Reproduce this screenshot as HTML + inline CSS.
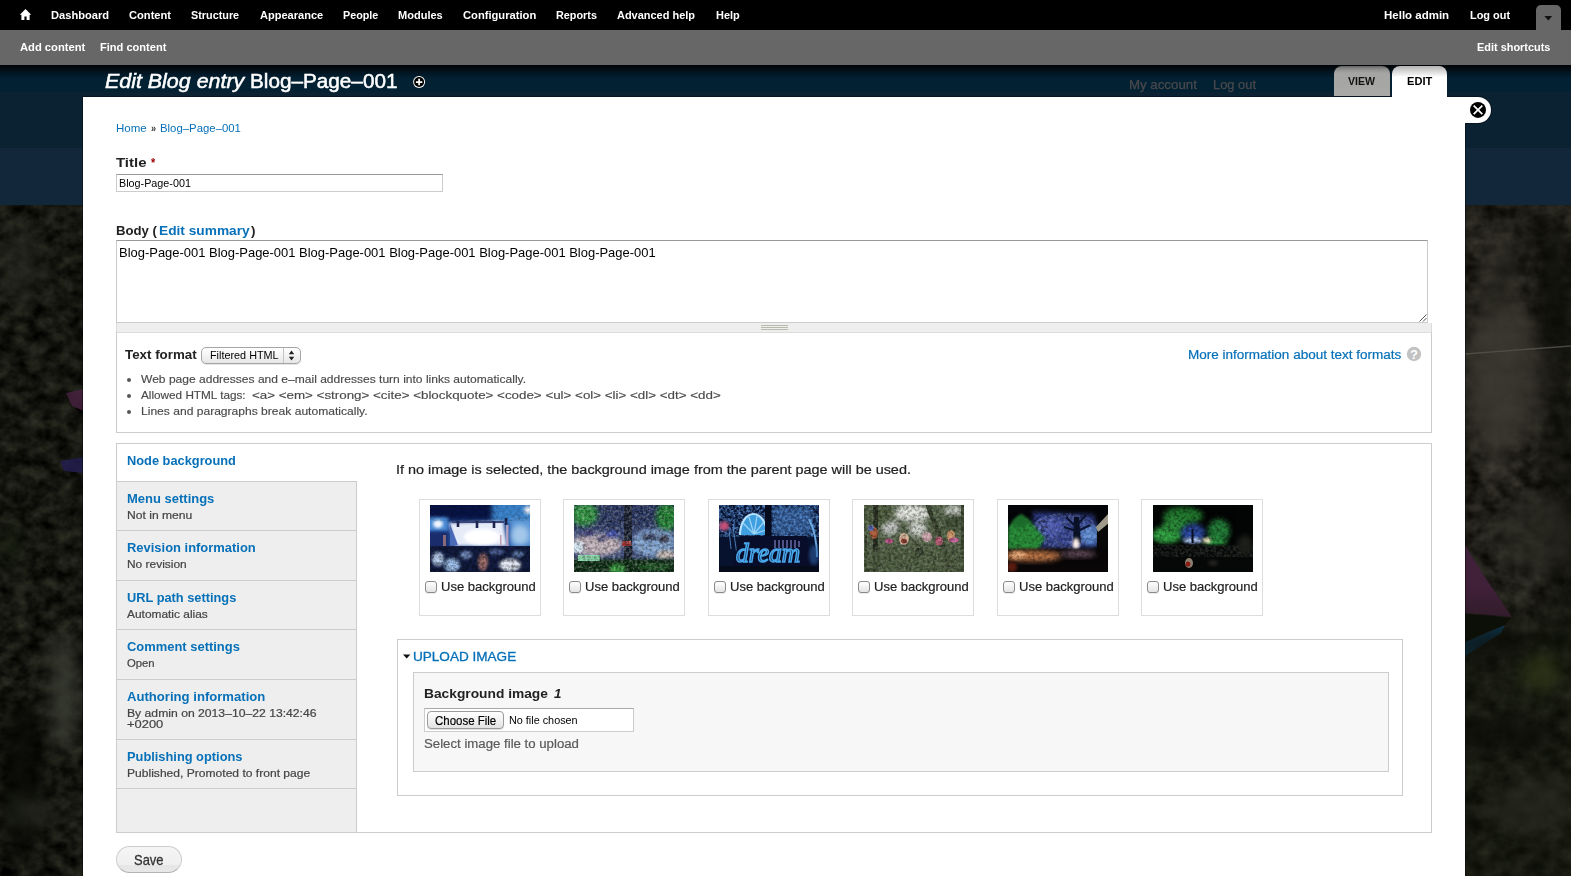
<!DOCTYPE html>
<html><head><meta charset="utf-8"><title>Edit Blog entry Blog-Page-001</title>
<style>
html,body{margin:0;padding:0}
body{width:1571px;height:876px;overflow:hidden;position:relative;background:#1b1e16;font-family:"Liberation Sans",sans-serif}
.a{position:absolute;box-sizing:border-box}
.t{position:absolute;white-space:pre;transform-origin:0 50%;display:block}
svg{position:absolute;display:block}
#tb{left:0;top:0;width:1571px;height:30px;background:#000}
#sc{left:0;top:30px;width:1571px;height:35px;background:#676767}
#tog{left:1536px;top:5px;width:25px;height:25px;background:#676767;border-radius:5px 5px 0 0}
.band{left:0;width:1571px}
#ov{left:83px;top:97px;width:1382px;height:779px;background:#fff}
#close{left:1465px;top:97px;width:26px;height:26px;background:#fff;border-radius:0 13px 13px 0}
.tab{top:66px;height:31px;border-radius:8px 8px 0 0}
.bx{border:1px solid #ccc}
.vt{left:116px;width:241px;background:#eee;border:1px solid #ccc;border-left:0;border-top:0}
.thumb{top:499px;width:122px;height:117px;border:1px solid #ddd;background:#fff}
.cb{width:12px;height:12px;border:1px solid #8a8a8a;border-radius:3px;background:linear-gradient(#fff,#e4e4e4);top:581px;box-shadow:0 1px 0 rgba(0,0,0,.08)}

</style></head>
<body>
<!-- page backdrop (dimmed site behind overlay) -->
<div class="a band" style="top:65px;height:27px;background:linear-gradient(#000206 0,#010a10 3px,#02121a 6px,#021827 9px,#021e2e 12px,#022233 15px,#022233 27px)"></div>
<div class="a band" style="top:92px;height:56px;background:#0b2232"></div>
<div class="a band" style="top:148px;height:57px;background:#12283a"></div>
<svg style="left:0;top:205px" width="84" height="671" viewBox="0 0 84 671">
<defs><filter id="sb" x="-60%" y="-60%" width="220%" height="220%" color-interpolation-filters="sRGB"><feGaussianBlur stdDeviation="9"/></filter>
<filter id="folL" x="0" y="0" width="100%" height="100%" color-interpolation-filters="sRGB"><feTurbulence type="fractalNoise" baseFrequency="0.07 0.08" numOctaves="3" seed="11"/><feColorMatrix type="matrix" values="0.24 0 0 0 -0.038  0.25 0 0 0 -0.039  0.20 0 0 0 -0.038  0 0 0 0 1"/></filter>
<filter id="folR" x="0" y="0" width="100%" height="100%" color-interpolation-filters="sRGB"><feTurbulence type="fractalNoise" baseFrequency="0.06 0.07" numOctaves="3" seed="23"/><feColorMatrix type="matrix" values="0.26 0 0 0 -0.005  0.26 0 0 0 -0.01  0.23 0 0 0 -0.02  0 0 0 0 1"/></filter>
</defs>
<rect width="84" height="671" fill="#181b12" filter="url(#folL)"/>
<path d="M66 188L84 184V206L72 201z" fill="#47223f" opacity=".85"/>
<path d="M60 256L84 252V268L64 266z" fill="#221d50" opacity=".85"/>
<ellipse cx="64" cy="488" rx="15" ry="62" fill="#3b3e34" opacity=".8" filter="url(#sb)"/>
<ellipse cx="20" cy="60" rx="26" ry="40" fill="#2a2d24" opacity=".5" filter="url(#sb)"/>
<ellipse cx="22" cy="575" rx="22" ry="80" fill="#070805" opacity=".8" filter="url(#sb)"/>
<ellipse cx="34" cy="606" rx="30" ry="12" fill="#2d3026" opacity=".7" filter="url(#sb)"/>
<ellipse cx="10" cy="340" rx="14" ry="20" fill="#1c2412" opacity=".6" filter="url(#sb)"/>
</svg>
<svg style="left:1465px;top:205px" width="106" height="671" viewBox="0 0 106 671">
<rect width="106" height="671" fill="#22231c" filter="url(#folR)"/>
<ellipse cx="40" cy="170" rx="44" ry="70" fill="#38352e" opacity=".75" filter="url(#sb)"/>
<ellipse cx="88" cy="80" rx="16" ry="70" fill="#0d0e08" opacity=".8" filter="url(#sb)"/>
<ellipse cx="34" cy="150" rx="24" ry="130" fill="#3f3c34" opacity=".55" filter="url(#sb)"/>
<ellipse cx="96" cy="260" rx="18" ry="190" fill="#0c0d08" opacity=".55" filter="url(#sb)"/>
<path d="M70 0L20 110" stroke="#0f100a" stroke-width="14" opacity=".55" filter="url(#sb)"/>
<path d="M0 149L106 141" stroke="#55554c" stroke-width="1.4" opacity=".8"/>
<ellipse cx="70" cy="330" rx="40" ry="40" fill="#2e2d25" opacity=".6" filter="url(#sb)"/>
<path d="M0 340L17 368L47 412L0 408z" fill="#41203a"/>
<path d="M0 437L40 420L36 428L0 451z" fill="#0e4f80"/><path d="M0 409L46 413L40 420L0 436z" fill="#0d0e08"/>
<linearGradient id="rg" x1="0" y1="0" x2="0" y2="1"><stop offset="0" stop-color="#0e1408" stop-opacity="0"/><stop offset=".18" stop-color="#0e1408" stop-opacity=".5"/><stop offset="1" stop-color="#0e1408" stop-opacity=".5"/></linearGradient><rect y="380" width="106" height="291" fill="url(#rg)"/>
<ellipse cx="76" cy="468" rx="18" ry="18" fill="#333a1a" opacity=".8" filter="url(#sb)"/>
<ellipse cx="40" cy="530" rx="50" ry="14" fill="#0b0c07" opacity=".8" filter="url(#sb)"/>
<ellipse cx="30" cy="440" rx="40" ry="14" fill="#0b0c07" opacity=".6" filter="url(#sb)"/>
<ellipse cx="70" cy="600" rx="40" ry="30" fill="#2a2b22" opacity=".6" filter="url(#sb)"/>
</svg>

<!-- toolbar -->
<div class="a" id="tb"></div>
<div class="a" id="sc"></div>
<div class="a" id="tog"></div>
<svg style="left:1544px;top:15px" width="9" height="6" viewBox="0 0 9 6"><path d="M0.4 1h7.8l-3.9 4.5z" fill="#111"/></svg>
<svg style="left:19px;top:8px" width="13" height="13" viewBox="0 0 13 13"><path d="M6.5 1 L12.2 6.8 H10.6 V12 H7.6 V8.6 H5.4 V12 H2.4 V6.8 H0.8 Z" fill="#fff"/></svg>

<!-- overlay title "+" shortcut icon -->
<svg style="left:412px;top:75px" width="14" height="14" viewBox="0 0 14 14"><circle cx="7.1" cy="7.05" r="6" fill="#fff"/><circle cx="7.1" cy="7.05" r="5" fill="#000"/><path d="M3.9 7.05h6.4M7.1 3.85v6.4" stroke="#fff" stroke-width="1.7"/></svg>


<!-- overlay body -->
<div class="a" style="left:82px;top:96px;width:1384px;height:780px;background:rgba(0,6,14,.45)"></div>
<div class="a" style="left:1466px;top:96px;width:26px;height:28px;background:rgba(0,6,14,.45);border-radius:0 14px 14px 0"></div>
<div class="a" id="ov"></div>
<div class="a" id="close"></div>
<!-- tabs -->
<div class="a tab" style="left:1334px;width:56px;height:30px;background:linear-gradient(#626363 0,#8c8c8b 3px,#a5a5a3 7px,#a8a8a6)"></div>
<div class="a tab" style="left:1392px;width:55px;background:linear-gradient(#b4b4b4,#fff 36%,#fff)"></div>
<svg style="left:1468px;top:100px" width="20" height="20" viewBox="0 0 20 20"><circle cx="10" cy="9.9" r="8" fill="#000"/><path d="M5.7 5.6l8.6 8.6M14.3 5.6l-8.6 8.6" stroke="#fff" stroke-width="1.7" stroke-linecap="butt"/></svg>

<!-- title input -->
<div class="a" style="left:116px;top:174px;width:327px;height:18px;background:#fff;border:1px solid #ccc;border-top-color:#999"></div>
<!-- textarea -->
<div class="a" style="left:116px;top:240px;width:1312px;height:83px;background:#fff;border:1px solid #ccc;border-top-color:#999"></div>
<svg style="left:1418px;top:313px" width="9" height="9" viewBox="0 0 9 9"><path d="M8.5 1.5L1.5 8.5M8.5 5L5 8.5" stroke="#555" stroke-width="1"/></svg>
<!-- grippie -->
<div class="a" style="left:116px;top:323px;width:1316px;height:10px;background:#eee;border:1px solid #ddd;border-top:0"></div>
<div class="a" style="left:761px;top:325px;width:27px;height:1px;background:#b9b9ac"></div>
<div class="a" style="left:761px;top:327px;width:27px;height:1px;background:#b9b9ac"></div>
<div class="a" style="left:761px;top:329px;width:27px;height:1px;background:#b9b9ac"></div>
<!-- filter wrapper -->
<div class="a bx" style="left:116px;top:332px;width:1316px;height:101px;border-top:0"></div>
<!-- select -->
<div class="a" style="left:201px;top:347px;width:100px;height:17px;border:1px solid #a5a5a5;border-radius:5px;background:linear-gradient(#fff,#f4f4f4 50%,#e6e6e6);box-shadow:0 1px 0 rgba(0,0,0,.1)"></div>
<div class="a" style="left:283px;top:348px;width:1px;height:15px;background:#c4c4c4"></div>
<svg style="left:288px;top:350px" width="7" height="11" viewBox="0 0 7 11"><path d="M3.5 0.6L6.2 4.2H0.8zM3.5 10.4L6.2 6.8H0.8z" fill="#222"/></svg>
<!-- help icon -->
<svg style="left:1406px;top:346px" width="16" height="16" viewBox="0 0 16 16"><circle cx="8" cy="8" r="7.2" fill="#c2c2c2"/><text x="8" y="12.6" text-anchor="middle" font-family="Liberation Sans" font-weight="bold" font-size="13" fill="#fff">?</text></svg>
<!-- bullets -->
<div class="a" style="left:127px;top:378px;width:4px;height:4px;border-radius:2px;background:#555"></div>
<div class="a" style="left:127px;top:394px;width:4px;height:4px;border-radius:2px;background:#555"></div>
<div class="a" style="left:127px;top:410px;width:4px;height:4px;border-radius:2px;background:#555"></div>

<!-- vertical tabs -->
<div class="a bx" style="left:116px;top:443px;width:1316px;height:390px;background:#fff"></div>
<div class="a" style="left:117px;top:481px;width:240px;height:351px;background:#eee;border-right:1px solid #ccc"></div>
<div class="a" style="left:117px;top:481px;width:240px;height:1px;background:#ccc"></div>
<div class="a" style="left:117px;top:530px;width:240px;height:1px;background:#ccc"></div>
<div class="a" style="left:117px;top:580px;width:240px;height:1px;background:#ccc"></div>
<div class="a" style="left:117px;top:629px;width:240px;height:1px;background:#ccc"></div>
<div class="a" style="left:117px;top:679px;width:240px;height:1px;background:#ccc"></div>
<div class="a" style="left:117px;top:739px;width:240px;height:1px;background:#ccc"></div>
<div class="a" style="left:117px;top:788px;width:240px;height:1px;background:#ccc"></div>

<!-- thumbnails -->
<div class="a thumb" style="left:419px"></div>
<svg style="left:430px;top:505px" width="100" height="67" viewBox="0 0 100 67"><defs>
<filter id="b0" x="-20%" y="-20%" width="140%" height="140%" color-interpolation-filters="sRGB"><feGaussianBlur stdDeviation="0.7"/></filter>
<filter id="b1" x="-20%" y="-20%" width="140%" height="140%" color-interpolation-filters="sRGB"><feGaussianBlur stdDeviation="1.4"/></filter>
<filter id="b2" x="-30%" y="-30%" width="160%" height="160%" color-interpolation-filters="sRGB"><feGaussianBlur stdDeviation="2.8"/></filter>
<filter id="b3" x="-40%" y="-40%" width="180%" height="180%" color-interpolation-filters="sRGB"><feGaussianBlur stdDeviation="4.5"/></filter>
<filter id="nzd" x="0" y="0" width="100%" height="100%"><feTurbulence type="fractalNoise" baseFrequency="0.33" numOctaves="3" seed="7" result="n"/><feColorMatrix in="n" type="matrix" values="0 0 0 0 0  0 0 0 0 0  0 0 0 0 0  2.2 0 0 0 -0.85"/></filter>
<filter id="nzl" x="0" y="0" width="100%" height="100%"><feTurbulence type="fractalNoise" baseFrequency="0.36" numOctaves="3" seed="19" result="n"/><feColorMatrix in="n" type="matrix" values="0 0 0 0 1  0 0 0 0 1  0 0 0 0 1  0 2.2 0 0 -0.9"/></filter>
<filter id="nz" x="0" y="0" width="100%" height="100%"><feTurbulence type="fractalNoise" baseFrequency="0.36" numOctaves="3" seed="7" result="n"/><feColorMatrix in="n" type="matrix" values="0 0 0 0 0  0 0 0 0 0  0 0 0 0 0  2.2 0 0 0 -0.8" result="a"/><feComposite in="SourceGraphic" in2="a" operator="in"/></filter>
</defs><rect width="100" height="67" fill="#1d4690"/>
<rect x="-5" y="-5" width="75" height="20" fill="#081445" filter="url(#b2)"/>
<rect x="62" y="-4" width="45" height="22" fill="#3b84cc" filter="url(#b2)"/>
<ellipse cx="98" cy="5" rx="4" ry="4" fill="#eef6ff" filter="url(#b1)"/>
<rect x="-4" y="12" width="22" height="14" fill="#4a8ad4" filter="url(#b1)"/>
<ellipse cx="8" cy="19" rx="5" ry="4" fill="#f4f8ff" filter="url(#b1)"/>
<rect x="-4" y="27" width="22" height="16" fill="#1a2c6c" filter="url(#b1)"/>
<rect x="80" y="14" width="24" height="28" fill="#5f9ad8" filter="url(#b2)"/><ellipse cx="90" cy="30" rx="9" ry="10" fill="#b4d2ee" opacity=".8" filter="url(#b2)"/>
<path d="M19 18L73 16L77 41L25 41z" fill="#e6ebf8" filter="url(#b1)"/>
<ellipse cx="52" cy="32" rx="18" ry="8" fill="#ffffff" filter="url(#b1)"/>
<path d="M20 19L28 40L20 41z" fill="#4a6ab8" filter="url(#b0)"/>
<path d="M22 17H74" stroke="#3a4478" stroke-width="2.2"/>
<path d="M28 16v6M47 16v7M64 16v7M76 13v7" stroke="#1c2450" stroke-width="2.6"/>
<rect x="13" y="30" width="3" height="13" fill="#8a6a7a"/><rect x="76" y="20" width="2.5" height="22" fill="#b0a0c0"/><rect x="70" y="30" width="1.5" height="12" fill="#c0a0b0"/>
<rect x="-2" y="41" width="104" height="30" fill="#121c40" filter="url(#b0)"/>
<ellipse cx="8" cy="54" rx="6" ry="7" fill="#b8d0ee" filter="url(#b1)"/>
<ellipse cx="22" cy="60" rx="8" ry="7" fill="#9ec0ea" filter="url(#b1)"/>
<ellipse cx="36" cy="50" rx="6" ry="4" fill="#7a94c4" filter="url(#b1)"/>
<ellipse cx="53" cy="57" rx="5" ry="9" fill="#a0706c" filter="url(#b1)"/>
<ellipse cx="80" cy="60" rx="11" ry="6.5" fill="#e4ebf5" filter="url(#b1)"/>
<ellipse cx="88" cy="49" rx="6" ry="3" fill="#6a86b8" filter="url(#b1)"/>
<ellipse cx="66" cy="47" rx="8" ry="3" fill="#52689c" filter="url(#b1)"/>
<rect y="42" width="100" height="25" fill="#000" filter="url(#nzd)" opacity=".55"/>
<rect y="0" width="100" height="16" fill="#000" filter="url(#nzd)" opacity=".25"/></svg>
<div class="a cb" style="left:425px"></div>
<div class="a thumb" style="left:563px"></div>
<svg style="left:574px;top:505px" width="100" height="67" viewBox="0 0 100 67"><rect width="100" height="67" fill="#3d4c7c"/>
<rect x="-5" y="-5" width="110" height="28" fill="#27345f" filter="url(#b2)"/>
<ellipse cx="10" cy="9" rx="14" ry="12" fill="#2f9440" filter="url(#b2)"/>
<ellipse cx="93" cy="12" rx="11" ry="15" fill="#1f8030" filter="url(#b2)"/>
<ellipse cx="22" cy="40" rx="26" ry="11" fill="#c4b4bc" filter="url(#b2)"/>
<ellipse cx="4" cy="42" rx="6" ry="6" fill="#d8ecf8" filter="url(#b1)"/>
<ellipse cx="80" cy="38" rx="22" ry="14" fill="#7ea2d0" filter="url(#b2)"/>
<ellipse cx="92" cy="50" rx="10" ry="5" fill="#c4b8b4" filter="url(#b1)"/>
<ellipse cx="14" cy="28" rx="7" ry="3" fill="#3c3c74" filter="url(#b1)"/>
<ellipse cx="38" cy="29" rx="6" ry="3.5" fill="#3a48a8" filter="url(#b1)"/>
<ellipse cx="28" cy="34" rx="5" ry="2.5" fill="#3a3a6c" filter="url(#b1)"/>
<ellipse cx="76" cy="32" rx="8" ry="3" fill="#2a3050" filter="url(#b1)"/>
<ellipse cx="90" cy="34" rx="5" ry="4" fill="#2a2a3c" filter="url(#b1)"/>
<rect x="50" y="-2" width="8" height="62" fill="#171f30" filter="url(#b0)"/>
<rect x="48" y="36" width="9" height="5" fill="#a83838" filter="url(#b0)"/>
<rect x="-2" y="54" width="104" height="16" fill="#0c2c12" filter="url(#b1)"/>
<rect x="4" y="50" width="22" height="6" fill="#86d8a8" filter="url(#b0)"/>
<ellipse cx="43" cy="64" rx="8" ry="5" fill="#2f9a34" filter="url(#b1)"/>
<ellipse cx="80" cy="62" rx="16" ry="3" fill="#1f5a24" filter="url(#b1)"/>
<rect width="100" height="67" fill="#000" filter="url(#nzd)" opacity=".5"/><rect width="100" height="67" fill="#fff" filter="url(#nzl)" opacity=".35"/></svg>
<div class="a cb" style="left:569px"></div>
<div class="a thumb" style="left:708px"></div>
<svg style="left:719px;top:505px" width="100" height="67" viewBox="0 0 100 67"><rect width="100" height="67" fill="#07122f"/>
<rect x="0" y="0" width="100" height="32" fill="#5a8fd2" filter="url(#nz)"/>
<rect x="53" y="2" width="40" height="28" fill="#4f86cc" opacity=".45" filter="url(#b2)"/>
<ellipse cx="5" cy="21" rx="5" ry="4.5" fill="#c45078" filter="url(#b1)"/>
<path d="M21 30A13.5 21 0 0 1 48 30z" fill="#3f9ede" filter="url(#b0)"/>
<path d="M21 30A13.5 21 0 0 1 48 30" fill="none" stroke="#b8e2ff" stroke-width="2" filter="url(#b0)"/>
<path d="M35 29L24 18M35 29L30 12M35 29L38 11M35 29L45 17M35 29L47 25" stroke="#9ad4f8" stroke-width="1.3"/>
<rect x="46" y="-1" width="6.5" height="34" fill="#050a1c"/>
<path d="M90 14Q98 30 98 52" fill="none" stroke="#6aa8e0" stroke-width="2" filter="url(#b0)"/>
<path d="M14 22L18 50M10 24L12 44" stroke="#5a90d0" stroke-width="1" opacity=".8"/>
<path d="M21 31H88L91 61L13 63z" fill="#080e2a"/>
<rect x="-1" y="61" width="102" height="7" fill="#060b1a"/>
<path d="M56 35v8M60 35v8M64 35v8M68 35v8M72 35v8M76 35v8M80 36v6" stroke="#8a8ad0" stroke-width="1.1"/>
<text x="17" y="57" font-family="Liberation Serif" font-style="italic" font-size="27" textLength="64" lengthAdjust="spacingAndGlyphs" fill="none" stroke="#48a6ea" stroke-width="1.7" filter="url(#b0)">dream</text>
<ellipse cx="95" cy="50" rx="5" ry="10" fill="#2c5a9c" opacity=".6" filter="url(#b1)"/></svg>
<div class="a cb" style="left:714px"></div>
<div class="a thumb" style="left:852px"></div>
<svg style="left:864px;top:505px" width="100" height="67" viewBox="0 0 100 67"><rect width="100" height="67" fill="#536246"/>
<ellipse cx="48" cy="8" rx="18" ry="9" fill="#e4e6e0" filter="url(#b2)"/>
<ellipse cx="90" cy="6" rx="10" ry="6" fill="#c8ccc4" filter="url(#b2)"/>
<ellipse cx="26" cy="22" rx="9" ry="8" fill="#c4c8c4" filter="url(#b2)"/>
<ellipse cx="54" cy="24" rx="9" ry="8" fill="#cfd2cc" filter="url(#b2)"/>
<ellipse cx="14" cy="10" rx="14" ry="10" fill="#4a5a3a" filter="url(#b2)"/>
<ellipse cx="90" cy="18" rx="10" ry="8" fill="#3c4a30" filter="url(#b2)"/>
<rect x="9" y="-1" width="5" height="69" fill="#262e1e" filter="url(#b0)"/>
<path d="M61 -1h4L92 67h-6z" fill="#333d28" filter="url(#b0)"/>
<rect x="97" y="-1" width="4" height="69" fill="#39462e"/>
<rect x="1" y="30" width="2" height="37" fill="#2e3826"/>
<ellipse cx="10" cy="28" rx="4" ry="6" fill="#b05a38" filter="url(#b0)"/>
<ellipse cx="7" cy="23" rx="3" ry="3" fill="#5a6ab0" filter="url(#b0)"/>
<ellipse cx="25" cy="36" rx="4" ry="2.5" fill="#c0508a" filter="url(#b0)"/>
<ellipse cx="40" cy="34" rx="5" ry="6" fill="#d8b49a" filter="url(#b0)"/>
<ellipse cx="40" cy="36" rx="3" ry="2.5" fill="#8a3a2a" filter="url(#b0)"/>
<ellipse cx="63" cy="32" rx="5" ry="5" fill="#d0a8b0" filter="url(#b0)"/>
<ellipse cx="75" cy="36" rx="4" ry="4.5" fill="#c0607a" filter="url(#b0)"/>
<ellipse cx="87" cy="31" rx="4" ry="6" fill="#d89a6a" filter="url(#b0)"/>
<ellipse cx="90" cy="35" rx="5" ry="2.5" fill="#c8609a" filter="url(#b0)"/>
<ellipse cx="55" cy="47" rx="4" ry="4" fill="#15180f" filter="url(#b0)"/>
<rect x="-2" y="44" width="104" height="26" fill="#4a5a3c" opacity=".75" filter="url(#b2)"/>
<rect width="100" height="67" fill="#000" filter="url(#nzd)" opacity=".5"/><rect width="100" height="67" fill="#fff" filter="url(#nzl)" opacity=".22"/></svg>
<div class="a cb" style="left:858px"></div>
<div class="a thumb" style="left:997px"></div>
<svg style="left:1008px;top:505px" width="100" height="67" viewBox="0 0 100 67"><rect width="100" height="67" fill="#040508"/>
<path d="M24 7L86 10L91 42L30 44z" fill="#303e88" filter="url(#b2)"/>
<ellipse cx="82" cy="30" rx="10" ry="10" fill="#5a8ad4" filter="url(#b2)"/>
<ellipse cx="40" cy="22" rx="14" ry="9" fill="#4a58b0" filter="url(#b2)"/>
<ellipse cx="57" cy="26" rx="34" ry="18" fill="#aebfe8" opacity=".4" filter="url(#nz)"/><ellipse cx="57" cy="25" rx="36" ry="20" fill="#000" opacity=".35" filter="url(#nzd)"/>
<path d="M0 22L12 10L20 14L37 33L30 45L0 47z" fill="#2a8f3a" filter="url(#b1)"/><rect x="0" y="8" width="40" height="40" fill="#000" opacity=".4" filter="url(#nzd)"/>
<path d="M4 16L14 9L22 18L10 24z" fill="#1c6a2a" filter="url(#b1)"/>
<path d="M66 12h5l2 26h-8z" fill="#0a1024" filter="url(#b0)"/>
<path d="M68 22L58 12M69 20L78 10M68 26L56 22M70 26L82 20" stroke="#0c1430" stroke-width="2" filter="url(#b0)"/>
<ellipse cx="68" cy="39" rx="3.5" ry="6" fill="#fff0ea" filter="url(#b1)"/>
<path d="M89 26L101 18V68H89z" fill="#080808"/>
<path d="M88 22L101 8v10L90 27z" fill="#a09a8a" filter="url(#b0)"/>
<rect x="-2" y="44" width="104" height="26" fill="#090607" filter="url(#b1)"/>
<ellipse cx="24" cy="51" rx="30" ry="5.5" fill="#c07848" filter="url(#b2)"/>
<ellipse cx="10" cy="50" rx="8" ry="4" fill="#e8a878" filter="url(#b1)"/>
<ellipse cx="70" cy="49" rx="18" ry="3.5" fill="#6a5260" filter="url(#b2)"/>
<ellipse cx="4" cy="62" rx="5" ry="5" fill="#5a1c10" filter="url(#b1)"/>
<rect x="-2" y="44" width="104" height="14" fill="#000" opacity=".45" filter="url(#nzd)"/></svg>
<div class="a cb" style="left:1003px"></div>
<div class="a thumb" style="left:1141px"></div>
<svg style="left:1153px;top:505px" width="100" height="67" viewBox="0 0 100 67"><rect width="100" height="67" fill="#030404"/>
<ellipse cx="30" cy="11" rx="20" ry="9" fill="#22782e" filter="url(#b2)"/>
<ellipse cx="14" cy="30" rx="15" ry="9" fill="#35a846" filter="url(#b2)"/>
<ellipse cx="22" cy="20" rx="12" ry="8" fill="#2a8a38" filter="url(#b2)"/>
<ellipse cx="66" cy="26" rx="11" ry="12" fill="#24803a" filter="url(#b2)"/>
<ellipse cx="62" cy="38" rx="12" ry="5" fill="#2c9440" filter="url(#b2)"/>
<ellipse cx="40" cy="28" rx="12" ry="9" fill="#2f4ea8" filter="url(#b2)"/>
<ellipse cx="40" cy="35.5" rx="10" ry="3" fill="#b4ccf4" filter="url(#b1)"/>
<ellipse cx="54" cy="35.5" rx="4" ry="3" fill="#fff2cc" filter="url(#b1)"/>
<rect x="38.5" y="24" width="2" height="14" fill="#0a1024"/>
<rect x="0" y="2" width="82" height="40" fill="#000" opacity=".5" filter="url(#nzd)"/>
<rect x="-2" y="40" width="104" height="30" fill="#060707" filter="url(#b1)"/>
<rect x="0" y="40" width="100" height="12" fill="#4a5048" opacity=".55" filter="url(#nz)"/>
<ellipse cx="92" cy="40" rx="8" ry="10" fill="#1c1e1a" filter="url(#b2)"/>
<ellipse cx="36" cy="58" rx="4" ry="5" fill="#8a8070" filter="url(#b0)"/>
<ellipse cx="35" cy="59" rx="2.4" ry="2.6" fill="#8a1c14" filter="url(#b0)"/>
<ellipse cx="60" cy="58" rx="5" ry="3" fill="#20221e" filter="url(#b1)"/></svg>
<div class="a cb" style="left:1147px"></div>

<!-- upload fieldset -->
<div class="a bx" style="left:397px;top:639px;width:1006px;height:157px;background:#fff"></div>
<svg style="left:403px;top:654px" width="8" height="5" viewBox="0 0 8 5"><path d="M0 0.6h7.4L3.7 4.6z" fill="#111"/></svg>
<div class="a bx" style="left:413px;top:672px;width:976px;height:100px;background:#f7f7f7"></div>
<div class="a" style="left:424px;top:708px;width:210px;height:24px;background:#fff;border:1px solid #ccc;border-top-color:#aaa"></div>
<div class="a" style="left:427px;top:711px;width:77px;height:18px;border:1px solid #9a9a9a;border-radius:4px;background:linear-gradient(#fff,#f2f2f2 50%,#e2e2e2);box-shadow:0 1px 0 rgba(0,0,0,.12)"></div>

<!-- save -->
<div class="a" style="left:116px;top:846px;width:66px;height:27px;border:1px solid #cdcdcd;border-bottom-color:#b4b4b4;border-radius:14px;background:linear-gradient(#f5f5f5,#efefef 70%,#e6e6e6 71%,#e7e7e7)"></div>

<!-- text -->
<span class="t" style="left:51.20px;top:10px;font:normal bold 11px/1 'Liberation Sans',sans-serif;color:#fff;transform:scaleX(1.0100)">Dashboard</span>
<span class="t" style="left:128.90px;top:10px;font:normal bold 11px/1 'Liberation Sans',sans-serif;color:#fff;transform:scaleX(1.0124)">Content</span>
<span class="t" style="left:191.00px;top:10px;font:normal bold 11px/1 'Liberation Sans',sans-serif;color:#fff;transform:scaleX(0.9840)">Structure</span>
<span class="t" style="left:259.70px;top:10px;font:normal bold 11px/1 'Liberation Sans',sans-serif;color:#fff;transform:scaleX(1.0039)">Appearance</span>
<span class="t" style="left:343.00px;top:10px;font:normal bold 11px/1 'Liberation Sans',sans-serif;color:#fff;transform:scaleX(0.9792)">People</span>
<span class="t" style="left:398.00px;top:10px;font:normal bold 11px/1 'Liberation Sans',sans-serif;color:#fff;transform:scaleX(1.0024)">Modules</span>
<span class="t" style="left:462.80px;top:10px;font:normal bold 11px/1 'Liberation Sans',sans-serif;color:#fff;transform:scaleX(1.0155)">Configuration</span>
<span class="t" style="left:556.20px;top:10px;font:normal bold 11px/1 'Liberation Sans',sans-serif;color:#fff;transform:scaleX(0.9845)">Reports</span>
<span class="t" style="left:617.00px;top:10px;font:normal bold 11px/1 'Liberation Sans',sans-serif;color:#fff;transform:scaleX(0.9972)">Advanced help</span>
<span class="t" style="left:716.00px;top:10px;font:normal bold 11px/1 'Liberation Sans',sans-serif;color:#fff;transform:scaleX(0.9951)">Help</span>
<span class="t" style="left:1384.20px;top:10px;font:normal bold 11px/1 'Liberation Sans',sans-serif;color:#fff;transform:scaleX(1.0443)">Hello admin</span>
<span class="t" style="left:1470.30px;top:10px;font:normal bold 11px/1 'Liberation Sans',sans-serif;color:#fff;transform:scaleX(0.9938)">Log out</span>
<span class="t" style="left:19.90px;top:42px;font:normal bold 11px/1 'Liberation Sans',sans-serif;color:#fff;transform:scaleX(1.0171)">Add content</span>
<span class="t" style="left:100.00px;top:42px;font:normal bold 11px/1 'Liberation Sans',sans-serif;color:#fff;transform:scaleX(1.0056)">Find content</span>
<span class="t" style="left:1477.00px;top:42px;font:normal bold 11px/1 'Liberation Sans',sans-serif;color:#fff;transform:scaleX(0.9928)">Edit shortcuts</span>
<span class="t" style="left:105.00px;top:71px;font:italic normal 20px/1 'Liberation Sans',sans-serif;color:#fff;-webkit-text-stroke:0.5px #fff;transform:scaleX(1.0704)">Edit Blog entry</span>
<span class="t" style="left:250.46px;top:71px;font:normal normal 20px/1 'Liberation Sans',sans-serif;color:#fff;-webkit-text-stroke:0.5px #fff;transform:scaleX(1.0359)">Blog–Page–001</span>
<span class="t" style="left:1128.58px;top:78px;font:normal normal 13px/1 'Liberation Sans',sans-serif;color:#4a494d;-webkit-text-stroke:0.25px #4a494d;transform:scaleX(1.0203)">My account</span>
<span class="t" style="left:1212.61px;top:78px;font:normal normal 13px/1 'Liberation Sans',sans-serif;color:#4a494d;-webkit-text-stroke:0.25px #4a494d;transform:scaleX(0.9915)">Log out</span>
<span class="t" style="left:1348.40px;top:76px;font:normal bold 11px/1 'Liberation Sans',sans-serif;color:#111;transform:scaleX(0.9607)">VIEW</span>
<span class="t" style="left:1406.80px;top:76px;font:normal bold 11px/1 'Liberation Sans',sans-serif;color:#000;transform:scaleX(1.0064)">EDIT</span>
<span class="t" style="left:115.80px;top:123px;font:normal normal 11px/1 'Liberation Sans',sans-serif;color:#0670b8;transform:scaleX(1.0471)">Home</span>
<span class="t" style="left:150.60px;top:123px;font:normal bold 11px/1 'Liberation Sans',sans-serif;color:#333;transform:scaleX(0.8333)">»</span>
<span class="t" style="left:160.00px;top:123px;font:normal normal 11px/1 'Liberation Sans',sans-serif;color:#0670b8;transform:scaleX(1.0336)">Blog–Page–001</span>
<span class="t" style="left:115.90px;top:156px;font:normal bold 13px/1 'Liberation Sans',sans-serif;color:#222;transform:scaleX(1.1501)">Title</span>
<span class="t" style="left:151.00px;top:156px;font:normal bold 13px/1 'Liberation Sans',sans-serif;color:#a30000;transform:scaleX(0.8333)">*</span>
<span class="t" style="left:119.00px;top:178px;font:normal normal 11px/1 'Liberation Sans',sans-serif;color:#000;transform:scaleX(0.9800)">Blog-Page-001</span>
<span class="t" style="left:116.00px;top:224px;font:normal bold 13px/1 'Liberation Sans',sans-serif;color:#222;transform:scaleX(1.0119)">Body (</span>
<span class="t" style="left:158.50px;top:224px;font:normal bold 13px/1 'Liberation Sans',sans-serif;color:#0670b8;transform:scaleX(1.0548)">Edit summary</span>
<span class="t" style="left:250.50px;top:224px;font:normal bold 13px/1 'Liberation Sans',sans-serif;color:#222;transform:scaleX(1.0250)">)</span>
<span class="t" style="left:118.60px;top:246px;font:normal normal 13px/1 'Liberation Sans',sans-serif;color:#000;transform:scaleX(0.9967)">Blog-Page-001 Blog-Page-001 Blog-Page-001 Blog-Page-001 Blog-Page-001 Blog-Page-001</span>
<span class="t" style="left:125.30px;top:348px;font:normal bold 13px/1 'Liberation Sans',sans-serif;color:#222;transform:scaleX(1.0270)">Text format</span>
<span class="t" style="left:210.40px;top:350px;font:normal normal 11px/1 'Liberation Sans',sans-serif;color:#000;transform:scaleX(0.9847)">Filtered HTML</span>
<span class="t" style="left:1188.40px;top:349px;font:normal normal 12px/1 'Liberation Sans',sans-serif;color:#0670b8;-webkit-text-stroke:0.2px #0670b8;transform:scaleX(1.1261)">More information about text formats</span>
<span class="t" style="left:141.00px;top:374px;font:normal normal 11px/1 'Liberation Sans',sans-serif;color:#4a4a4a;-webkit-text-stroke:0.15px #4a4a4a;transform:scaleX(1.0946)">Web page addresses and e–mail addresses turn into links automatically.</span>
<span class="t" style="left:141.00px;top:390px;font:normal normal 11px/1 'Liberation Sans',sans-serif;color:#4a4a4a;-webkit-text-stroke:0.15px #4a4a4a;transform:scaleX(1.0674)">Allowed HTML tags:</span>
<span class="t" style="left:251.80px;top:390px;font:normal normal 11px/1 'Liberation Sans',sans-serif;color:#4a4a4a;-webkit-text-stroke:0.15px #4a4a4a;transform:scaleX(1.2145)">&lt;a&gt; &lt;em&gt; &lt;strong&gt; &lt;cite&gt; &lt;blockquote&gt; &lt;code&gt; &lt;ul&gt; &lt;ol&gt; &lt;li&gt; &lt;dl&gt; &lt;dt&gt; &lt;dd&gt;</span>
<span class="t" style="left:141.00px;top:406px;font:normal normal 11px/1 'Liberation Sans',sans-serif;color:#4a4a4a;-webkit-text-stroke:0.15px #4a4a4a;transform:scaleX(1.0973)">Lines and paragraphs break automatically.</span>
<span class="t" style="left:127.20px;top:454px;font:normal bold 13px/1 'Liberation Sans',sans-serif;color:#0670b8;transform:scaleX(0.9858)">Node background</span>
<span class="t" style="left:127.20px;top:492px;font:normal bold 13px/1 'Liberation Sans',sans-serif;color:#0670b8;transform:scaleX(0.9993)">Menu settings</span>
<span class="t" style="left:127.20px;top:510px;font:normal normal 11px/1 'Liberation Sans',sans-serif;color:#444;-webkit-text-stroke:0.2px #444;transform:scaleX(1.1015)">Not in menu</span>
<span class="t" style="left:127.20px;top:541px;font:normal bold 13px/1 'Liberation Sans',sans-serif;color:#0670b8;transform:scaleX(0.9958)">Revision information</span>
<span class="t" style="left:127.20px;top:559px;font:normal normal 11px/1 'Liberation Sans',sans-serif;color:#444;-webkit-text-stroke:0.2px #444;transform:scaleX(1.0855)">No revision</span>
<span class="t" style="left:127.20px;top:591px;font:normal bold 13px/1 'Liberation Sans',sans-serif;color:#0670b8;transform:scaleX(0.9847)">URL path settings</span>
<span class="t" style="left:127.20px;top:609px;font:normal normal 11px/1 'Liberation Sans',sans-serif;color:#444;-webkit-text-stroke:0.2px #444;transform:scaleX(1.0827)">Automatic alias</span>
<span class="t" style="left:127.20px;top:640px;font:normal bold 13px/1 'Liberation Sans',sans-serif;color:#0670b8;transform:scaleX(0.9950)">Comment settings</span>
<span class="t" style="left:127.20px;top:658px;font:normal normal 11px/1 'Liberation Sans',sans-serif;color:#444;-webkit-text-stroke:0.2px #444;transform:scaleX(1.0264)">Open</span>
<span class="t" style="left:127.20px;top:690px;font:normal bold 13px/1 'Liberation Sans',sans-serif;color:#0670b8;transform:scaleX(1.0083)">Authoring information</span>
<span class="t" style="left:127.20px;top:708px;font:normal normal 11px/1 'Liberation Sans',sans-serif;color:#444;-webkit-text-stroke:0.2px #444;transform:scaleX(1.1067)">By admin on 2013–10–22 13:42:46</span>
<span class="t" style="left:127.20px;top:750px;font:normal bold 13px/1 'Liberation Sans',sans-serif;color:#0670b8;transform:scaleX(0.9867)">Publishing options</span>
<span class="t" style="left:127.20px;top:768px;font:normal normal 11px/1 'Liberation Sans',sans-serif;color:#444;-webkit-text-stroke:0.2px #444;transform:scaleX(1.0976)">Published, Promoted to front page</span>
<span class="t" style="left:127.20px;top:719px;font:normal normal 11px/1 'Liberation Sans',sans-serif;color:#444;-webkit-text-stroke:0.2px #444;transform:scaleX(1.1730)">+0200</span>
<span class="t" style="left:396.29px;top:463px;font:normal normal 13px/1 'Liberation Sans',sans-serif;color:#222;-webkit-text-stroke:0.2px #222;transform:scaleX(1.1081)">If no image is selected, the background image from the parent page will be used.</span>
<span class="t" style="left:440.60px;top:580px;font:normal normal 13px/1 'Liberation Sans',sans-serif;color:#222;-webkit-text-stroke:0.2px #222;transform:scaleX(1.0017)">Use background</span>
<span class="t" style="left:584.60px;top:580px;font:normal normal 13px/1 'Liberation Sans',sans-serif;color:#222;-webkit-text-stroke:0.2px #222;transform:scaleX(1.0017)">Use background</span>
<span class="t" style="left:729.60px;top:580px;font:normal normal 13px/1 'Liberation Sans',sans-serif;color:#222;-webkit-text-stroke:0.2px #222;transform:scaleX(1.0017)">Use background</span>
<span class="t" style="left:873.60px;top:580px;font:normal normal 13px/1 'Liberation Sans',sans-serif;color:#222;-webkit-text-stroke:0.2px #222;transform:scaleX(1.0017)">Use background</span>
<span class="t" style="left:1018.60px;top:580px;font:normal normal 13px/1 'Liberation Sans',sans-serif;color:#222;-webkit-text-stroke:0.2px #222;transform:scaleX(1.0017)">Use background</span>
<span class="t" style="left:1162.60px;top:580px;font:normal normal 13px/1 'Liberation Sans',sans-serif;color:#222;-webkit-text-stroke:0.2px #222;transform:scaleX(1.0017)">Use background</span>
<span class="t" style="left:413.46px;top:650px;font:normal normal 13px/1 'Liberation Sans',sans-serif;color:#0670b8;-webkit-text-stroke:0.3px #0670b8;transform:scaleX(1.0428)">UPLOAD IMAGE</span>
<span class="t" style="left:424.40px;top:687px;font:normal bold 13px/1 'Liberation Sans',sans-serif;color:#222;transform:scaleX(1.0591)">Background image</span>
<span class="t" style="left:554.10px;top:687px;font:italic bold 13px/1 'Liberation Sans',sans-serif;color:#222;transform:scaleX(1.0286)">1</span>
<span class="t" style="left:435.30px;top:714px;font:normal normal 13px/1 'Liberation Sans',sans-serif;color:#000;-webkit-text-stroke:0.2px #000;transform:scaleX(0.8823)">Choose File</span>
<span class="t" style="left:509.40px;top:715px;font:normal normal 11px/1 'Liberation Sans',sans-serif;color:#000;transform:scaleX(0.9844)">No file chosen</span>
<span class="t" style="left:424.00px;top:738px;font:normal normal 12px/1 'Liberation Sans',sans-serif;color:#5a5a5a;-webkit-text-stroke:0.2px #5a5a5a;transform:scaleX(1.1008)">Select image file to upload</span>
<span class="t" style="left:134.10px;top:853px;font:normal normal 14.5px/1 'Liberation Sans',sans-serif;color:#333;-webkit-text-stroke:0.3px #333;transform:scaleX(0.8943)">Save</span>
</body></html>
